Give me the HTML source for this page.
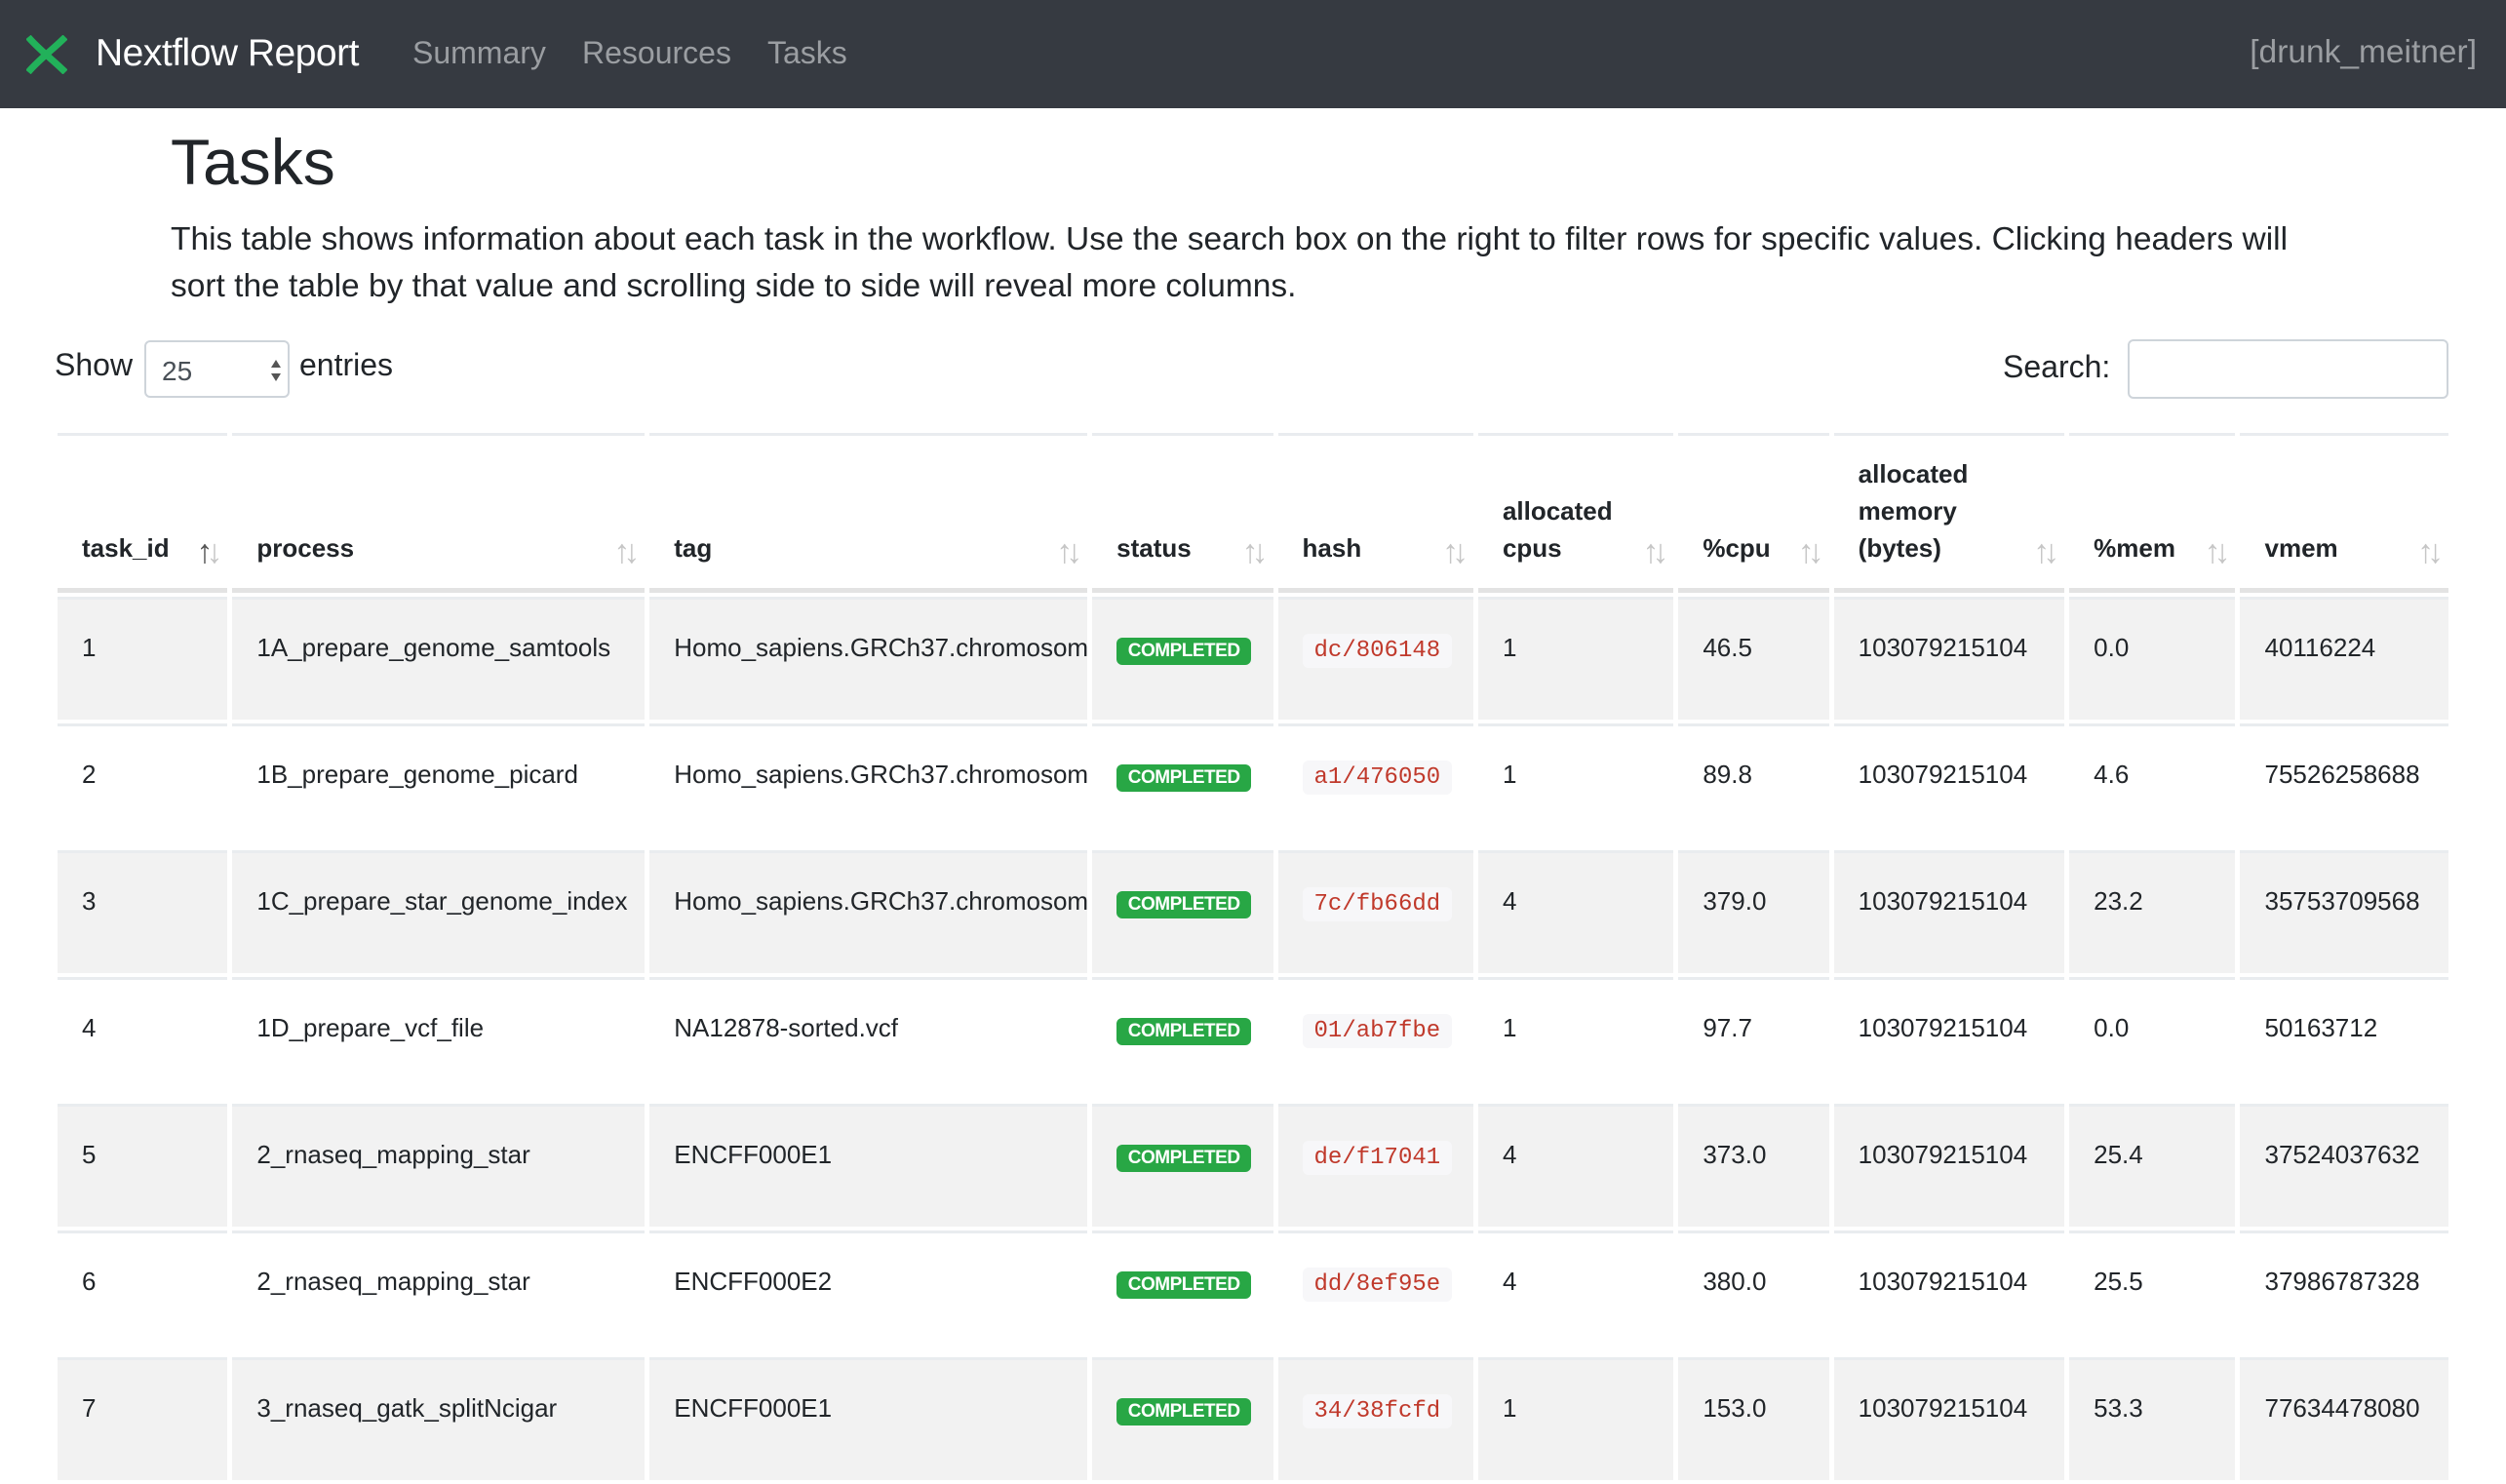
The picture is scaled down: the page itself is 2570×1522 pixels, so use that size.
<!DOCTYPE html>
<html><head><meta charset="utf-8">
<style>
*{box-sizing:border-box;margin:0;padding:0}
body{width:2570px;height:1500px;overflow:hidden;background:#fff;font-family:"Liberation Sans",sans-serif;color:#212529}
.nav{height:111px;background:#363a41;position:relative}
.nav svg{position:absolute;left:27px;top:36px}
.brand{position:absolute;left:98px;top:33px;font-size:39px;color:#fff;letter-spacing:-0.5px}
.nl{position:absolute;top:36px;font-size:32px;color:#9b9ea2}
h1{position:absolute;left:175px;top:128px;font-size:66px;font-weight:500}
p.lead{position:absolute;left:175px;top:222px;width:2230px;font-size:33.5px;line-height:48px}
.show{position:absolute;left:56px;top:356px;font-size:32px}
.sel{position:absolute;left:148px;top:349px;width:149px;height:59px;border:2px solid #ced4da;border-radius:6px;font-size:28px;padding:14px 0 0 16px;color:#495057}
.ent{position:absolute;left:307px;top:356px;font-size:32px}
.srch{position:absolute;left:2054px;top:358px;font-size:32px}
.inp{position:absolute;left:2182px;top:348px;width:329px;height:61px;border:2px solid #ced4da;border-radius:6px}
table{position:absolute;left:54px;top:440px;border-collapse:separate;border-spacing:5px 4px;table-layout:fixed;width:2462px}
th{border-top:3px solid #e9ecef;border-bottom:5px solid #e3e3e3;text-align:left;vertical-align:bottom;font-size:26px;line-height:38px;padding:0 20px 22px 25px;height:164px;position:relative;font-weight:bold}
th .s{position:absolute;right:12px;bottom:18px;color:#c6c6c6;font-size:34px;letter-spacing:-7px;font-weight:normal}
td{border-top:3px solid #e9ecef;height:126px;vertical-align:top;padding:34px 20px 0 25px;font-size:26px;white-space:nowrap;overflow:hidden}
tr.o td{background:#f2f2f2}
.b{display:inline-block;background:#28a745;color:#fff;font-weight:bold;font-size:19px;border-radius:6px;padding:3px 6px;width:138px;text-align:center;letter-spacing:-0.5px;margin-top:2px}
.c{display:inline-block;background:#f7f7f9;color:#c0392b;font-family:"Liberation Mono",monospace;font-size:24px;padding:4px 12px;border-radius:6px;margin-top:-4px}
</style></head><body>
<div class="nav">
<svg width="42" height="40" viewBox="0 0 42 40"><path d="M2 2 C12 14 28 26 40 38" stroke="#22b15a" stroke-width="7" fill="none"/><path d="M40 2 C28 14 12 26 2 38" stroke="#22b15a" stroke-width="7" fill="none"/></svg>
<div class="brand">Nextflow Report</div>
<div class="nl" style="left:423px">Summary</div>
<div class="nl" style="left:597px">Resources</div>
<div class="nl" style="left:787px">Tasks</div>
<div class="nl" style="right:30px;font-size:33.5px;top:35px">[drunk_meitner]</div>
</div>
<h1>Tasks</h1>
<p class="lead">This table shows information about each task in the workflow. Use the search box on the right to filter rows for specific values. Clicking headers will sort the table by that value and scrolling side to side will reveal more columns.</p>
<div class="show">Show</div>
<div class="sel">25<svg style="position:absolute;right:6px;top:16px" width="12" height="26"><path d="M6 2L11 10H1Z M6 24L11 16H1Z" fill="#555"/></svg></div>
<div class="ent">entries</div>
<div class="srch">Search:</div>
<div class="inp"></div>
<table>
<thead><tr>
<th style="width:174px">task_id<span class="s"><span style="color:#555">↑</span>↓</span></th>
<th style="width:422px">process<span class="s">↑↓</span></th>
<th style="width:448px">tag<span class="s">↑↓</span></th>
<th style="width:185px">status<span class="s">↑↓</span></th>
<th style="width:200px">hash<span class="s">↑↓</span></th>
<th style="width:200px">allocated<br>cpus<span class="s">↑↓</span></th>
<th style="width:154px">%cpu<span class="s">↑↓</span></th>
<th style="width:236px">allocated<br>memory<br>(bytes)<span class="s">↑↓</span></th>
<th style="width:170px">%mem<span class="s">↑↓</span></th>
<th style="width:213px">vmem<span class="s">↑↓</span></th>
</tr></thead>
<tbody>
<tr class="o"><td>1</td><td>1A_prepare_genome_samtools</td><td style="padding-right:0">Homo_sapiens.GRCh37.chromosome.fa</td><td><span class="b">COMPLETED</span></td><td><span class="c">dc/806148</span></td><td>1</td><td>46.5</td><td>103079215104</td><td>0.0</td><td>40116224</td></tr>
<tr><td>2</td><td>1B_prepare_genome_picard</td><td style="padding-right:0">Homo_sapiens.GRCh37.chromosome.fa</td><td><span class="b">COMPLETED</span></td><td><span class="c">a1/476050</span></td><td>1</td><td>89.8</td><td>103079215104</td><td>4.6</td><td>75526258688</td></tr>
<tr class="o"><td>3</td><td>1C_prepare_star_genome_index</td><td style="padding-right:0">Homo_sapiens.GRCh37.chromosome.fa</td><td><span class="b">COMPLETED</span></td><td><span class="c">7c/fb66dd</span></td><td>4</td><td>379.0</td><td>103079215104</td><td>23.2</td><td>35753709568</td></tr>
<tr><td>4</td><td>1D_prepare_vcf_file</td><td>NA12878-sorted.vcf</td><td><span class="b">COMPLETED</span></td><td><span class="c">01/ab7fbe</span></td><td>1</td><td>97.7</td><td>103079215104</td><td>0.0</td><td>50163712</td></tr>
<tr class="o"><td>5</td><td>2_rnaseq_mapping_star</td><td>ENCFF000E1</td><td><span class="b">COMPLETED</span></td><td><span class="c">de/f17041</span></td><td>4</td><td>373.0</td><td>103079215104</td><td>25.4</td><td>37524037632</td></tr>
<tr><td>6</td><td>2_rnaseq_mapping_star</td><td>ENCFF000E2</td><td><span class="b">COMPLETED</span></td><td><span class="c">dd/8ef95e</span></td><td>4</td><td>380.0</td><td>103079215104</td><td>25.5</td><td>37986787328</td></tr>
<tr class="o"><td>7</td><td>3_rnaseq_gatk_splitNcigar</td><td>ENCFF000E1</td><td><span class="b">COMPLETED</span></td><td><span class="c">34/38fcfd</span></td><td>1</td><td>153.0</td><td>103079215104</td><td>53.3</td><td>77634478080</td></tr>
</tbody></table>
</body></html>
